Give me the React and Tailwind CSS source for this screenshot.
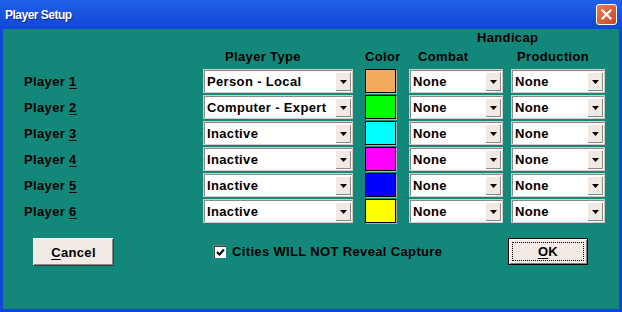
import React from 'react'

const font = { fontFamily: '"Liberation Sans", Arial, sans-serif' }

const players = [
  { n: '1', type: 'Person - Local', color: 'bg-[#f5ab5e]' },
  { n: '2', type: 'Computer - Expert', color: 'bg-[#00ff00]' },
  { n: '3', type: 'Inactive', color: 'bg-[#00ffff]' },
  { n: '4', type: 'Inactive', color: 'bg-[#ff00ff]' },
  { n: '5', type: 'Inactive', color: 'bg-[#0000ff]' },
  { n: '6', type: 'Inactive', color: 'bg-[#ffff00]' },
]

function Combo({ value, className }) {
  return (
    <div className={`relative h-[24px] bg-white border border-[#d4ccc4] shadow-[inset_1px_1px_0_#8a8a8a] flex items-center ${className}`}>
      <span className="pl-[3px] text-[13px] font-bold text-black leading-[15px] tracking-[0.35px] whitespace-nowrap">{value}</span>
      <div className="absolute right-[1px] top-[2px] bottom-[1px] w-[16px] bg-[#f1e9e2] border-t border-l border-white shadow-[inset_-1px_-1px_0_#8a8a8a] flex items-center justify-center">
        <svg width="8" height="5" viewBox="0 0 8 5" className="mt-[1px]">
          <path d="M0 0H7L3.5 4Z" fill="#000" />
        </svg>
      </div>
    </div>
  )
}

function WinButton({ children, isDefault, className }) {
  return (
    <div
      className={`h-[27px] w-[80px] bg-[#f2ebe4] flex items-center justify-center ${
        isDefault
          ? 'border border-black shadow-[inset_1px_1px_0_#ffffff,inset_-1px_-1px_0_#7a7a7a]'
          : 'border-t border-l border-white shadow-[1px_1px_0_#3a3a3a,inset_-1px_-1px_0_#8a8a8a]'
      } ${className}`}
    >
      {isDefault ? (
        <div className="w-[72px] h-[19px] border border-dotted border-black flex items-center justify-center">
          {children}
        </div>
      ) : (
        children
      )}
    </div>
  )
}

export default function App() {
  return (
    <div className="w-[622px] h-[312px] bg-[#1047d8] flex flex-col" style={font}>
      {/* title bar */}
      <div className="h-[29px] flex items-center justify-between pl-[5px] pr-[5px] bg-gradient-to-b from-[#2160e6] to-[#1146d6]">
        <span className="text-white text-[12px] font-bold tracking-[-0.5px] [text-shadow:1px_1px_0_#0a2a90]">Player Setup</span>
        <div className="w-[21px] h-[21px] rounded-[3px] border border-white bg-gradient-to-br from-[#ec7a56] to-[#d04420] flex items-center justify-center">
          <svg width="11" height="11" viewBox="0 0 11 11">
            <path d="M1.5 1.5L9.5 9.5M9.5 1.5L1.5 9.5" stroke="#fff" strokeWidth="2.2" strokeLinecap="square" />
          </svg>
        </div>
      </div>

      {/* body */}
      <div className="flex-1 mx-[3px] mb-[3px] bg-[#14877b] pl-[21px] text-black flex flex-col tracking-[0.35px]">
        <div className="pt-[1px] h-[16px] text-[13px] font-bold leading-[15px] pl-[453px]">Handicap</div>
        <div className="mt-[4px] h-[15px] flex text-[13px] font-bold leading-[15px]">
          <span className="ml-[201px] w-[140px]">Player Type</span>
          <span className="w-[53px]">Color</span>
          <span className="w-[99px]">Combat</span>
          <span>Production</span>
        </div>

        <div className="mt-[5px] flex flex-col gap-[2px]">
          {players.map((p) => (
            <div key={p.n} className="flex items-center h-[24px]">
              <span className="w-[179px] text-[13px] font-bold leading-[15px]">
                Player <span className="underline underline-offset-2">{p.n}</span>
              </span>
              <Combo value={p.type} className="w-[150px]" />
              <div className={`ml-[12px] w-[31px] h-[24px] border border-black shadow-[1px_1px_0_#b0b0b0] ${p.color}`} />
              <Combo value="None" className="ml-[13px] w-[94px]" />
              <Combo value="None" className="ml-[8px] w-[94px]" />
            </div>
          ))}
        </div>

        <div className="mt-[15px] flex items-center pr-[31px]">
          <WinButton className="ml-[9px]">
            <span className="text-[13px] font-bold leading-[15px]">
              <span className="underline underline-offset-2">C</span>ancel
            </span>
          </WinButton>
          <div className="ml-[100px] w-[13px] h-[13px] bg-white border-t border-l border-[#808080] shadow-[inset_1px_1px_0_#404040] flex items-center justify-center">
            <svg width="9" height="9" viewBox="0 0 9 9">
              <path d="M1 4L3.5 6.5L8 1.5" stroke="#000" strokeWidth="2" fill="none" />
            </svg>
          </div>
          <span className="ml-[6px] text-[13px] font-bold leading-[15px]">Cities WILL NOT Reveal Capture</span>
          <WinButton isDefault className="ml-auto">
            <span className="text-[13px] font-bold leading-[15px]">
              <span className="underline underline-offset-2">O</span>K
            </span>
          </WinButton>
        </div>
      </div>
    </div>
  )
}
